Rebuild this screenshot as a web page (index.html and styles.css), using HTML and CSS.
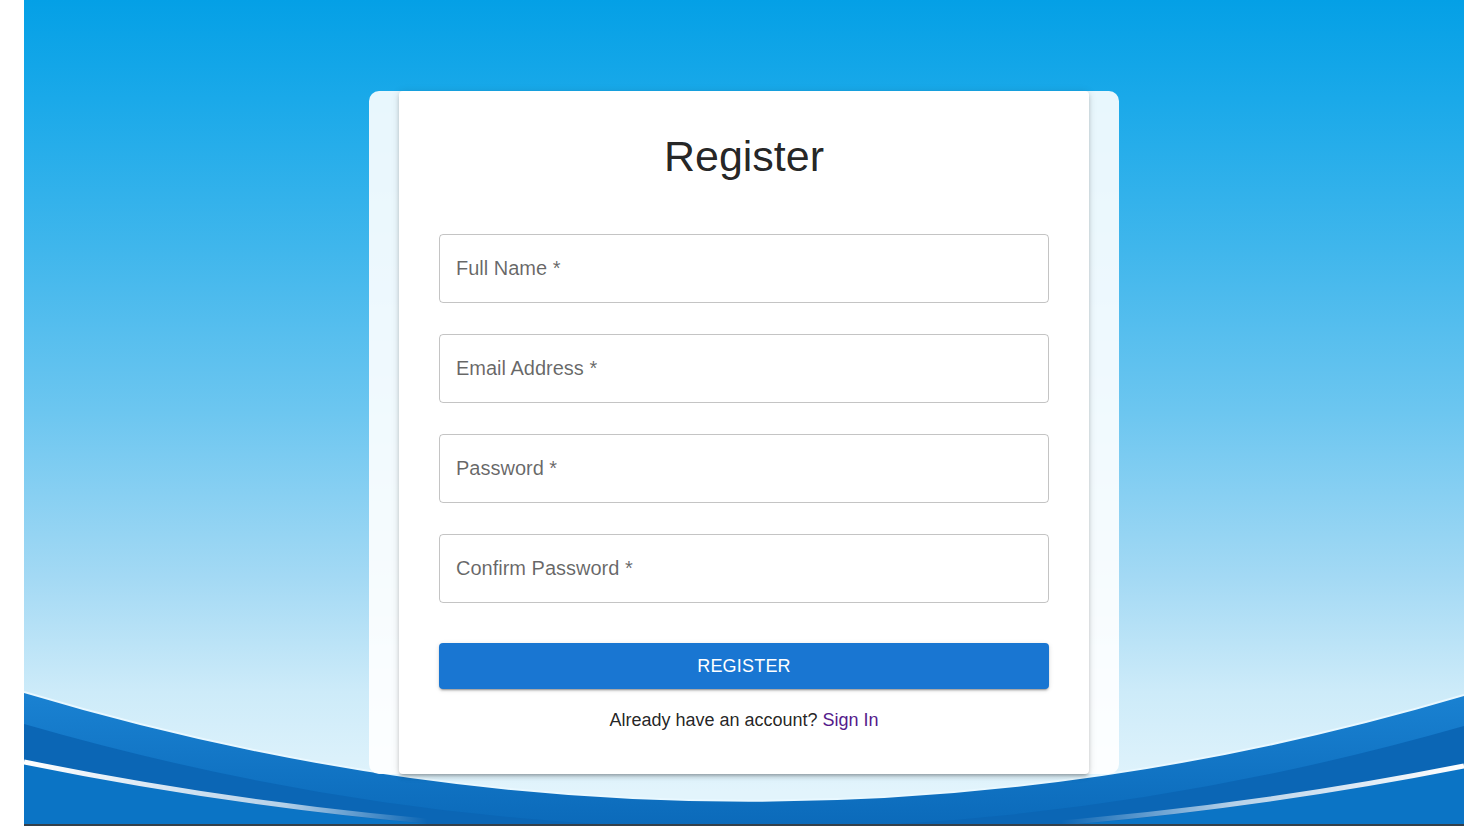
FILE: index.html
```html
<!DOCTYPE html>
<html lang="en">
<head>
<meta charset="utf-8">
<title>Register</title>
<link rel="stylesheet" href="styles.css">
</head>
<body>
<div class="page">
  <svg class="waves" viewBox="0 0 1440 186" preserveAspectRatio="none" aria-hidden="true">
    <defs>
      <linearGradient id="line" gradientUnits="userSpaceOnUse" x1="0" y1="0" x2="1440" y2="0">
        <stop offset="0" stop-color="#fff" stop-opacity="1"/>
        <stop offset="0.18" stop-color="#fff" stop-opacity="0.7"/>
        <stop offset="0.28" stop-color="#fff" stop-opacity="0"/>
        <stop offset="0.72" stop-color="#fff" stop-opacity="0"/>
        <stop offset="0.84" stop-color="#fff" stop-opacity="0.7"/>
        <stop offset="1" stop-color="#fff" stop-opacity="1"/>
      </linearGradient>
      <linearGradient id="band" x1="0" y1="0" x2="0" y2="1">
        <stop offset="0" stop-color="#1a82d2"/>
        <stop offset="1" stop-color="#0b6aba"/>
      </linearGradient>
    </defs>
    <path d="M0,52 Q720,268 1440,55 V186 H0 Z" fill="url(#band)"/>
    <path d="M0,52 Q720,268 1440,55" fill="none" stroke="#e9f8ff" stroke-width="2"/>
    <path d="M0,84 Q720,292 1440,86 V186 H0 Z" fill="#0b66b5"/>
    <path d="M0,124 Q720,272 1440,128 V186 H0 Z" fill="#0b74c5"/>
    <path d="M0,122 Q720,268 1440,126" fill="none" stroke="url(#line)" stroke-width="5"/>
  </svg>
  <div class="shell">
    <div class="card">
      <h1 class="title">Register</h1>
      <form class="form">
        <div class="field"><span class="label">Full Name *</span></div>
        <div class="field"><span class="label">Email Address *</span></div>
        <div class="field"><span class="label">Password *</span></div>
        <div class="field"><span class="label">Confirm Password *</span></div>
        <button type="button" class="btn">REGISTER</button>
        <p class="foot">Already have an account? <a class="link" href="#">Sign In</a></p>
      </form>
    </div>
  </div>
</div>
</body>
</html>
```
FILE: styles.css
```css
html, body {
  margin: 0;
  padding: 0;
  background: #ffffff;
}
body {
  font-family: "Liberation Sans", Arial, sans-serif;
  width: 1473px;
  height: 828px;
  overflow: hidden;
}
.page {
  position: relative;
  margin-left: 24px;
  width: 1440px;
  height: 826px;
  border-bottom: 2px solid #34404b;
  overflow: hidden;
  background: linear-gradient(180deg, #04a0e6 0%, #1aa9e9 12%, #3fb6ec 30%, #6cc6f0 50%, #a3d9f4 70%, #cdebf9 84%, #e2f4fc 96%);
  display: flex;
  justify-content: center;
  align-items: flex-start;
  padding-top: 91px;
  box-sizing: border-box;
}
.waves {
  position: absolute;
  left: 0;
  top: 640px;
  width: 1440px;
  height: 186px;
  display: block;
}
.shell {
  position: relative;
  z-index: 1;
  width: 750px;
  box-sizing: border-box;
  padding: 0 30px;
  background: rgba(255, 255, 255, 0.9);
  border-radius: 10px;
}
.card {
  background: #ffffff;
  border-radius: 4px;
  padding: 39px 40px 40px;
  box-shadow: 0px 3px 3px -2px rgba(0,0,0,0.2), 0px 3px 4px 0px rgba(0,0,0,0.14), 0px 1px 8px 0px rgba(0,0,0,0.12);
}
.title {
  margin: 0;
  font-size: 43px;
  line-height: 52px;
  font-weight: 400;
  text-align: center;
  color: rgba(0, 0, 0, 0.87);
}
.form {
  margin-top: 52px;
  display: flex;
  flex-direction: column;
}
.field {
  height: 69px;
  box-sizing: border-box;
  border: 1px solid rgba(0, 0, 0, 0.23);
  border-radius: 4px;
  display: flex;
  align-items: center;
  padding-left: 16px;
  padding-bottom: 1px;
  margin-bottom: 31px;
}
.field:last-of-type {
  margin-bottom: 40px;
}
.label {
  font-size: 20px;
  color: rgba(0, 0, 0, 0.6);
}
.btn {
  height: 46px;
  border: none;
  border-radius: 4px;
  background: #1976d2;
  color: #ffffff;
  font-family: "Liberation Sans", Arial, sans-serif;
  font-size: 18px;
  font-weight: 500;
  letter-spacing: 0.2px;
  box-shadow: 0px 3px 1px -2px rgba(0,0,0,0.2), 0px 2px 2px 0px rgba(0,0,0,0.14), 0px 1px 5px 0px rgba(0,0,0,0.12);
  cursor: pointer;
}
.foot {
  margin: 18px 0 0;
  font-size: 18px;
  line-height: 27px;
  text-align: center;
  color: rgba(0, 0, 0, 0.87);
}
.link {
  color: #551a8b;
  text-decoration: none;
}
```
